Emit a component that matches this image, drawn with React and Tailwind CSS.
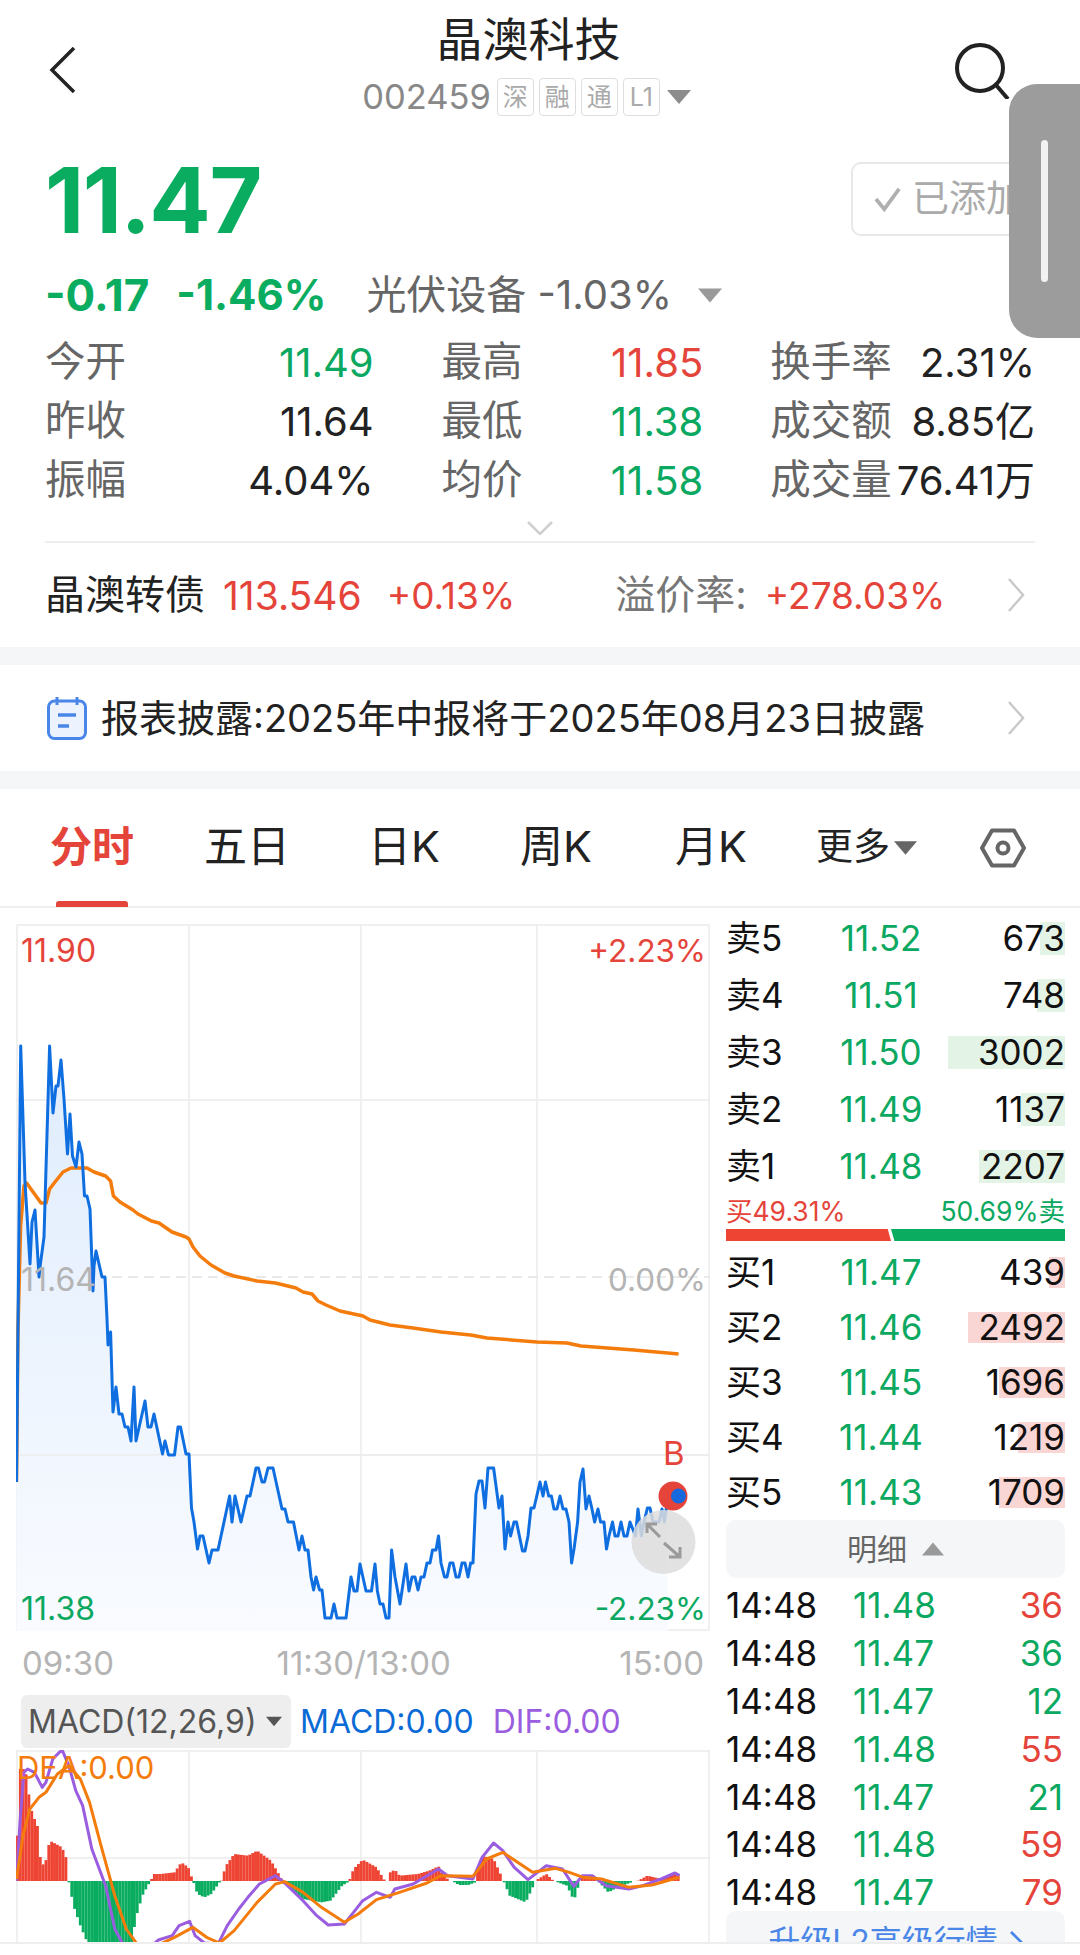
import React from "react";

const font = "font-['Inter','Noto_Sans_CJK_SC',sans-serif]";

const stats = [
  [["今开", "11.49", "text-[#0aa860]"], ["最高", "11.85", "text-[#e5443a]"], ["换手率", "2.31%", "text-[#222]"]],
  [["昨收", "11.64", "text-[#222]"], ["最低", "11.38", "text-[#0aa860]"], ["成交额", "8.85亿", "text-[#222]"]],
  [["振幅", "4.04%", "text-[#222]"], ["均价", "11.58", "text-[#0aa860]"], ["成交量", "76.41万", "text-[#222]"]],
];

const sells = [
  ["卖5", "11.52", "673", 25],
  ["卖4", "11.51", "748", 28],
  ["卖3", "11.50", "3002", 117],
  ["卖2", "11.49", "1137", 44],
  ["卖1", "11.48", "2207", 86],
];

const buys = [
  ["买1", "11.47", "439", 16],
  ["买2", "11.46", "2492", 97],
  ["买3", "11.45", "1696", 66],
  ["买4", "11.44", "1219", 47],
  ["买5", "11.43", "1709", 66],
];

const details = [
  ["11.48", "36", "text-[#e5443a]"],
  ["11.47", "36", "text-[#0aa860]"],
  ["11.47", "12", "text-[#0aa860]"],
  ["11.48", "55", "text-[#e5443a]"],
  ["11.47", "21", "text-[#0aa860]"],
  ["11.48", "59", "text-[#e5443a]"],
  ["11.47", "79", "text-[#e5443a]"],
];

// price line, page coordinates
const price = [[16.5,1483],[20.7,1047],[25,1183],[30,1265],[32,1223],[35,1211],[39,1278],[40,1268],[44,1238],[49.6,1047],[53,1114],[56,1087],[58,1087],[61,1061],[64,1100],[67.5,1155],[70,1115],[72.5,1157],[76,1168],[79,1143],[82,1155],[84.5,1197],[87,1197],[90,1210],[93,1292],[94,1267],[96,1252],[102,1278],[105,1278],[107,1320],[108,1346],[110.6,1333],[113,1413],[116,1388],[119,1415],[122,1415],[125,1428],[128,1428],[131,1442],[134,1388],[136,1442],[145,1402],[148,1428],[151,1428],[154,1415],[162.5,1455],[165,1442],[168.5,1456],[174.5,1456],[178,1428],[180.5,1428],[186,1455],[189,1455],[191.5,1509],[194,1523],[197.5,1550],[200,1537],[203,1537],[209,1564],[212,1551],[218,1551],[229.6,1497],[232,1523],[235,1497],[241,1523],[247,1497],[250,1497],[256,1469],[258.5,1469],[262,1483],[264.5,1483],[268,1469],[273,1469],[282,1510],[285,1510],[288,1523],[293.5,1523],[299,1551],[302,1537],[305,1551],[308,1551],[311,1578],[313.6,1591],[316,1578],[319.6,1591],[322,1591],[325,1619],[331,1619],[334,1605],[337,1619],[346,1619],[351,1578],[354,1592],[357,1592],[360,1565],[366,1592],[371.5,1592],[375,1565],[377.4,1592],[380,1605],[383,1605],[386,1619],[389,1619],[391.6,1551],[395,1578],[400,1605],[406,1565],[409,1592],[412,1578],[415,1578],[418,1591],[421,1578],[424,1578],[427,1564],[430,1564],[432.5,1551],[436,1551],[438.5,1537],[441,1564],[444.5,1578],[447,1578],[450,1564],[453,1564],[456,1578],[459,1578],[462,1564],[465,1564],[468,1578],[470.6,1564],[473,1564],[476,1495],[479,1482],[482,1482],[485,1509],[488,1469],[493.6,1469],[499,1509],[502,1497],[505,1550],[508,1523],[510.6,1537],[514,1523],[516.5,1523],[522.5,1552],[525,1552],[528,1537],[531,1509],[534,1509],[540,1483],[543,1497],[545.5,1483],[548.7,1497],[551.4,1497],[554,1510],[557,1510],[560,1497],[563,1510],[566,1510],[569,1523],[571.6,1564],[574,1550],[577.6,1523],[580,1483],[583,1470],[586,1510],[589,1497],[592,1510],[594.6,1523],[598,1510],[600.6,1523],[604,1523],[606.5,1550],[609,1537],[612.5,1523],[615,1537],[618,1537],[621,1523],[624,1537],[627,1537],[630,1523],[635.5,1537],[638,1510],[641.4,1537],[644,1523],[647.4,1509],[650,1509],[653,1523],[659,1523],[662,1510],[664.4,1523],[667.6,1500]];

const avg = [[16.5,1483],[18,1330],[20.6,1227],[24,1187],[26.6,1184],[41,1204],[46,1204],[49.6,1190],[55,1183],[63,1173],[71,1169],[87,1169],[94,1173],[105.6,1177],[110.6,1182],[113.4,1197],[120,1203],[133,1211],[138,1215],[151.5,1222],[159,1224],[172,1233],[186,1238],[189,1240],[193,1248],[200,1257],[211,1266],[225,1274],[234,1277],[257,1282],[275.5,1284],[296,1289],[303,1293],[312,1295],[318,1302],[326,1306],[340,1312],[363,1317],[370,1321],[390,1326],[413,1329],[441,1333],[470.6,1336],[487,1339],[537,1343],[567,1344],[581,1347],[634,1351],[678.6,1355]];

const toLine = (pts) => pts.map((p) => p.join(",")).join(" ");

// MACD traces read off the crop: x in crop units, y in crop units
const macdPt = ([x, y]) => [x / 2.178, 1660 + y / 3];
const dif = [[36,665],[44,480],[52,340],[60,330],[75,340],[92,385],[100,370],[115,300],[135,272],[150,320],[165,395],[180,440],[200,570],[230,680],[250,810],[270,860],[280,900],[320,900],[335,855],[345,843],[375,830],[390,800],[413,787],[425,830],[445,852],[475,855],[495,800],[520,750],[540,715],[565,675],[600,650],[620,672],[660,725],[690,770],[715,798],[750,795],[770,760],[790,725],[820,700],[850,715],[860,690],[900,675],[930,650],[955,630],[975,650],[1030,660],[1050,595],[1075,552],[1095,575],[1120,625],[1150,662],[1190,620],[1225,630],[1250,682],[1268,650],[1290,650],[1320,680],[1370,690],[1400,680],[1440,660],[1470,642],[1480,650]].map(macdPt);
const dea = [[36,660],[50,530],[65,450],[85,415],[100,400],[125,345],[150,320],[175,360],[195,430],[220,560],[250,710],[275,810],[300,858],[320,900],[335,870],[345,858],[380,835],[420,805],[450,835],[478,852],[510,815],[560,730],[600,675],[620,668],[660,700],[700,745],[750,790],[780,765],[820,722],[870,700],[930,672],[960,650],[1030,652],[1060,600],[1095,580],[1160,640],[1210,628],[1240,640],[1270,655],[1310,660],[1370,685],[1420,678],[1480,655]].map(macdPt);

const histo = [
  [[38,530],[44,330],[55,330],[62,400],[72,480],[80,480],[88,600],[97,625],[108,545],[122,555],[135,565],[145,600]],
  [[150,670],[160,740],[175,800],[190,850],[205,880],[285,880],[295,780],[310,710],[325,672]],
  [[330,660],[335,645],[350,645],[380,640],[395,610],[410,625],[420,665]],
  [[422,672],[430,705],[445,715],[460,705],[478,670]],
  [[482,665],[492,620],[510,585],[540,590],[560,575],[590,605],[605,640],[615,665]],
  [[620,670],[640,700],[660,720],[680,725],[700,730],[720,725],[745,680],[757,670]],
  [[762,660],[770,630],[790,602],[820,625],[838,665]],
  [[850,640],[860,632],[870,650],[910,645],[935,635],[955,622],[965,650],[975,660]],
  [[990,670],[1000,678],[1020,678],[1035,670]],
  [[1040,630],[1050,590],[1075,600],[1095,660]],
  [[1098,670],[1110,710],[1145,730],[1165,670]],
  [[1172,660],[1190,645],[1205,665]],
  [[1215,670],[1235,680],[1250,725],[1262,670]],
  [[1268,650],[1290,650],[1300,665]],
  [[1305,670],[1325,700],[1345,685],[1375,670]],
  [[1390,665],[1410,650],[1440,660],[1470,640],[1482,650]],
];

const histoBars = () => {
  const bars = [];
  histo.forEach((seg) => {
    for (let x = seg[0][0]; x <= seg[seg.length - 1][0]; x += 6.2) {
      let i = 0;
      while (i < seg.length - 2 && seg[i + 1][0] < x) i++;
      const [x0, y0] = seg[i];
      const [x1, y1] = seg[i + 1];
      const v = y0 + ((y1 - y0) * (x - x0)) / (x1 - x0);
      bars.push([x / 2.178, 1660 + v / 3]);
    }
  });
  return bars;
};

function Tri({ className }) {
  return (
    <svg viewBox="0 0 24 14" className={className}>
      <path d="M0 0h24L12 14z" fill="currentColor" />
    </svg>
  );
}

function RightArrow() {
  return (
    <svg viewBox="0 0 20 36" className="w-[19px] h-[34px]" fill="none" stroke="#c8c8c8" strokeWidth="2.5">
      <path d="M2 1l15 17L2 35" />
    </svg>
  );
}

function Tag({ children }) {
  return (
    <span className="flex items-center justify-center w-[37px] h-[38px] border-[1.5px] border-[#dedede] rounded-[4px] text-[25px] leading-none text-[#aaaaaa]">
      {children}
    </span>
  );
}

function StatCell({ label, value, color, width }) {
  return (
    <div className={`flex items-center justify-between ${width}`}>
      <span className="text-[#666] text-[40.5px] leading-none">{label}</span>
      <span className={`${color} text-[40px] leading-none`}>{value}</span>
    </div>
  );
}

function BookRow({ row, bar, height }) {
  const [label, p, qty, w] = row;
  return (
    <div className={`relative flex items-center ${height}`}>
      <span className="w-[98px] text-[35px] leading-none text-[#111]">{label}</span>
      <span className="w-[114px] text-center text-[35px] leading-none text-[#0aa860]">{p}</span>
      <div className="flex-1 flex justify-end relative">
        <div className={`absolute right-0 ${bar}`} style={{ width: w }} />
        <span className="relative text-[35px] leading-none text-[#111]">{qty}</span>
      </div>
    </div>
  );
}

export default function App() {
  const bars = histoBars();
  return (
    <div className={`relative w-[1080px] h-[1955px] bg-white overflow-hidden ${font}`}>
      {/* header */}
      <div className="flex h-[130px]">
        <div className="w-[361px] pl-[48px] pt-[47px]">
          <svg viewBox="0 0 28 46" className="w-[28px] h-[46px]" fill="none" stroke="#222" strokeWidth="3.5">
            <path d="M26 1L4 23l22 22" />
          </svg>
        </div>
        <div className="w-[331px] flex flex-col items-center">
          <div className="h-[78px] flex items-center text-[46px] leading-none text-[#222] pl-[4px]">晶澳科技</div>
          <div className="flex items-center gap-[5px]">
            <span className="text-[34.5px] leading-none text-[#888] mr-[1px]">002459</span>
            <Tag>深</Tag>
            <Tag>融</Tag>
            <Tag>通</Tag>
            <Tag>L1</Tag>
            <Tri className="w-[24px] h-[14px] text-[#8c8c8c] ml-[2px]" />
          </div>
        </div>
        <div className="pl-[262px] pt-[43px]">
          <svg viewBox="0 0 56 56" className="w-[56px] h-[56px]" fill="none" stroke="#222" strokeWidth="4">
            <circle cx="26" cy="25" r="23" />
            <path d="M42 42l12 14" />
          </svg>
        </div>
      </div>

      {/* quote */}
      <div className="flex items-center justify-between h-[135px] pl-[45px] pr-[38px]">
        <span className="text-[91px] leading-none font-bold text-[#0aad5f] tracking-[-1.5px] pt-[5px]">11.47</span>
        <div className="flex items-center w-[191px] h-[74px] border-2 border-[#e8e8e8] rounded-[10px] pl-[20px] mt-[2px] overflow-hidden">
          <svg viewBox="0 0 30 28" className="w-[30px] h-[26px] shrink-0" fill="none" stroke="#b0b0b0" strokeWidth="4">
            <path d="M2 14l9 11L27 3" />
          </svg>
          <span className="ml-[9px] text-[37px] leading-none text-[#aaaaaa] whitespace-nowrap">已添加</span>
        </div>
      </div>
      <div className="flex items-center h-[60px] pl-[45px]">
        <span className="text-[44px] leading-none font-bold text-[#0aad5f]">-0.17</span>
        <span className="ml-[27px] text-[42px] leading-none font-bold text-[#0aad5f]">-1.46%</span>
        <span className="ml-[40px] text-[40px] leading-none text-[#666]">光伏设备 -1.03%</span>
        <Tri className="w-[24px] h-[15px] text-[#9a9a9a] ml-[26px]" />
      </div>

      {/* stats */}
      <div className="mt-[8px] px-[45px]">
        {stats.map((row) => (
          <div key={row[0][0]} className="flex items-center h-[59px]">
            <StatCell label={row[0][0]} value={row[0][1]} color={row[0][2]} width="w-[329px]" />
            <StatCell label={row[1][0]} value={row[1][1]} color={row[1][2]} width="w-[262px] ml-[68px]" />
            <StatCell label={row[2][0]} value={row[2][1]} color={row[2][2]} width="w-[265px] ml-[67px]" />
          </div>
        ))}
      </div>
      <div className="mx-[45px] h-[33px] border-b-2 border-[#eeeeee] flex justify-center pt-[11px]">
        <svg viewBox="0 0 26 14" className="w-[26px] h-[14px]" fill="none" stroke="#cfcfcf" strokeWidth="2.5">
          <path d="M1 1l12 12L25 1" />
        </svg>
      </div>

      {/* bond row */}
      <div className="flex items-center h-[104px] pl-[45px] pr-[54px]">
        <span className="text-[40px] w-[178px] leading-none text-[#222] whitespace-nowrap">晶澳转债</span>
        <span className="text-[39px] leading-none text-[#e5443a]">113.546</span>
        <span className="ml-[25px] text-[37px] leading-none text-[#e5443a]">+0.13%</span>
        <span className="ml-[100px] text-[40px] leading-none text-[#777]">溢价率:</span>
        <span className="ml-[18px] text-[37px] leading-none text-[#e5443a]">+278.03%</span>
        <div className="ml-auto"><RightArrow /></div>
      </div>
      <div className="h-[18px] bg-[#f5f6f8]" />

      {/* report row */}
      <div className="flex items-center h-[106px] pl-[47px] pr-[54px]">
        <svg viewBox="0 0 40 44" className="w-[40px] h-[44px] shrink-0" fill="none">
          <rect x="1.5" y="5" width="37" height="37.5" rx="6" fill="#edf3fe" stroke="#4a86e8" strokeWidth="3" />
          <path d="M10 1v8M30 1v8" stroke="#4a86e8" strokeWidth="3" />
          <path d="M11 19h18M11 30h11" stroke="#4a86e8" strokeWidth="3.5" />
        </svg>
        <span className="ml-[14px] text-[38px] leading-none text-[#222] whitespace-nowrap">报表披露:2025年中报将于2025年08月23日披露</span>
        <div className="ml-auto"><RightArrow /></div>
      </div>
      <div className="h-[18px] bg-[#f5f6f8]" />

      {/* tabs */}
      <div className="relative flex items-center h-[119px] border-b-2 border-[#f0f0f0] text-[#222] text-[43px] leading-none pb-[2px]">
        <span className="absolute left-[50px] font-bold text-[#e5443a] text-[42px]">分时</span>
        <span className="absolute left-[204px]">五日</span>
        <span className="absolute left-[368px]">日K</span>
        <span className="absolute left-[520px]">周K</span>
        <span className="absolute left-[675px]">月K</span>
        <span className="absolute left-[816px] text-[37px]">更多</span>
        <Tri className="absolute left-[894px] top-[52px] w-[23px] h-[14px] text-[#666]" />
        <svg viewBox="0 0 46 40" className="absolute left-[980px] top-[39px] w-[46px] h-[40px]" fill="none" stroke="#666" strokeWidth="4">
          <path d="M12 2.5h22L44 20 34 37.5H12L2 20z" strokeLinejoin="round" />
          <circle cx="23" cy="20" r="5.5" />
        </svg>
        <div className="absolute left-[56px] bottom-[-1px] w-[72px] h-[6px] rounded-t-[3px] bg-[#e5443a]" />
      </div>

      {/* main */}
      <div className="flex h-[1036px] border-b-2 border-[#eeeeee] overflow-hidden">
        <div className="w-[726px] pl-[16px] pr-[16px] pt-[16px]">
          {/* intraday chart */}
          <div className="relative h-[707px] w-[694px]">
            <svg viewBox="16 925 694 707" className="absolute inset-0 w-[694px] h-[707px]" fill="none">
              <defs>
                <linearGradient id="fillPrice" x1="0" y1="0" x2="0" y2="1">
                  <stop offset="0" stopColor="#dfecfd" />
                  <stop offset="1" stopColor="#f9fbff" />
                </linearGradient>
              </defs>
              <rect x="17" y="926" width="692" height="705" stroke="#ececec" strokeWidth="1.5" />
              <path d="M189 925v707M361 925v707M537 925v707M16 1101h694M16 1456h694" stroke="#ececec" strokeWidth="1.5" />
              <path d="M16 1278h694" stroke="#e4e4e4" strokeWidth="1.5" strokeDasharray="10 6" />
              <polygon points={`16.5,1632 ${toLine(price)} 667.6,1632`} fill="url(#fillPrice)" />
              <path d="M16 1456h694" stroke="#ececec" strokeWidth="1.5" />
              <polyline points={toLine(avg)} stroke="#f47c0c" strokeWidth="3.5" strokeLinejoin="round" />
              <polyline points={toLine(price)} stroke="#0f6fe0" strokeWidth="3" strokeLinejoin="round" />
              <circle cx="663.5" cy="1543" r="32" fill="#dddddd" fillOpacity="0.85" />
              <path d="M660 1538l-13-13M647 1534v-9h10M664 1544l16 14M680 1548v10h-11" stroke="#9a9a9a" strokeWidth="3" />
              <circle cx="673" cy="1497" r="14.5" fill="#e5443a" />
              <circle cx="678.5" cy="1497" r="7.5" fill="#1668dc" />
            </svg>
            <span className="absolute left-[5px] top-[10px] text-[32px] leading-[34px] text-[#e5443a]">11.90</span>
            <span className="absolute right-[4px] top-[10px] text-[31.5px] leading-[34px] text-[#e5443a]">+2.23%</span>
            <span className="absolute left-[5px] top-[339px] text-[32px] leading-[34px] text-[#b4b4b4]">11.64</span>
            <span className="absolute right-[4px] top-[339px] text-[31.5px] leading-[34px] text-[#b4b4b4]">0.00%</span>
            <span className="absolute left-[5px] top-[668px] text-[32px] leading-[34px] text-[#0aa860]">11.38</span>
            <span className="absolute right-[4px] top-[668px] text-[31.5px] leading-[34px] text-[#0aa860]">-2.23%</span>
            <span className="absolute left-[647px] top-[512px] text-[33px] leading-[34px] text-[#e5443a]">B</span>
          </div>
          <div className="flex items-center justify-between h-[64px] px-[6px] text-[33px] leading-none text-[#b4b4b4]">
            <span>09:30</span>
            <span className="pr-[6px]">11:30/13:00</span>
            <span>15:00</span>
          </div>
          {/* macd */}
          <div className="flex items-center h-[53px] text-[32px] leading-none">
            <div className="flex items-center h-[53px] w-[270px] ml-[5px] pl-[7px] bg-[#eeeeee] rounded-[6px] text-[#555] whitespace-nowrap">
              MACD(12,26,9)
              <Tri className="w-[16px] h-[11px] ml-[9px] text-[#555] shrink-0" />
            </div>
            <span className="ml-[9px] text-[#0a6ad6]">MACD:0.00</span>
            <span className="ml-[19px] text-[#9b5de0]">DIF:0.00</span>
          </div>
          <div className="relative mt-[2px] h-[195px] w-[694px]">
            <svg viewBox="16 1751 694 195" className="absolute inset-0 w-[694px] h-[195px]" fill="none">
              <path d="M16 1752h694M17 1751v195M709 1751v195M189 1751v195M361 1751v195M537 1751v195M16 1859h694" stroke="#ececec" strokeWidth="1.5" />
              {bars.map(([x, y]) => (
                <rect
                  key={x}
                  x={x - 1.4}
                  y={Math.min(y, 1882)}
                  width="2.9"
                  height={Math.abs(y - 1882)}
                  fill={y < 1882 ? "#ee4433" : "#0aad5f"}
                />
              ))}
              <polyline points={toLine(dif)} stroke="#9b5de0" strokeWidth="3" strokeLinejoin="round" />
              <polyline points={toLine(dea)} stroke="#f47c0c" strokeWidth="3" strokeLinejoin="round" />
            </svg>
            <span className="absolute left-[1px] top-[1px] text-[31px] leading-[34px] text-[#f47c0c]">DEA:0.00</span>
          </div>
        </div>

        {/* order book */}
        <div className="w-[339px]">
          <div className="pt-[2px] h-[288px]">
            {sells.map((r) => (
              <BookRow key={r[0]} row={r} bar="top-[1px] bottom-[1px] bg-[#e3f3e6]" height="h-[57px]" />
            ))}
          </div>
          <div className="h-[49px] pt-[2px]">
            <div className="flex items-center justify-between h-[27px] text-[26.5px] leading-none">
              <span className="text-[#e5443a]">买49.31%</span>
              <span className="text-[#0aa860]">50.69%卖</span>
            </div>
            <div className="flex h-[12px] mt-[4px]">
              <div className="w-[165px] h-full bg-[#ee4433] [clip-path:polygon(0_0,98%_0,100%_100%,0_100%)]" />
              <div className="flex-1 h-full bg-[#0aad5f] [clip-path:polygon(0_0,100%_0,100%_100%,2%_100%)]" />
            </div>
          </div>
          <div>
            {buys.map((r) => (
              <BookRow key={r[0]} row={r} bar="top-[2px] bottom-[2px] bg-[#f9d5d3]" height="h-[55px]" />
            ))}
          </div>
          <div className="flex items-center justify-center h-[58px] bg-[#f5f6f8] rounded-[10px] text-[30px] leading-none text-[#666]">
            明细
            <Tri className="w-[22px] h-[14px] ml-[15px] text-[#999] rotate-180" />
          </div>
          <div className="h-[333px] pt-[4px] pr-[2px] overflow-hidden">
            {details.map((d, i) => (
              <div key={i} className="flex items-center h-[47.8px] text-[35px] leading-none">
                <span className="w-[127px] text-[#111]">14:48</span>
                <span className="text-[#0aa860]">{d[0]}</span>
                <span className={`ml-auto ${d[2]}`}>{d[1]}</span>
              </div>
            ))}
          </div>
          <div className="h-[34px] overflow-hidden bg-[#f5f6f8] rounded-t-[10px] flex justify-center pt-[14px]">
            <span className="flex items-center h-[34px] text-[32px] leading-none text-[#4a86e8] whitespace-nowrap">
              升级L2高级行情
              <svg viewBox="0 0 14 24" className="w-[13px] h-[22px] ml-[12px]" fill="none" stroke="#4a86e8" strokeWidth="3">
                <path d="M1 1l11 11L1 23" />
              </svg>
            </span>
          </div>
        </div>
      </div>

      {/* floating handle */}
      <div className="absolute right-0 top-[84px] w-[71px] h-[254px] rounded-l-[28px] bg-[#9c9c9c]">
        <div className="absolute left-[32px] top-[56px] w-[7px] h-[142px] rounded-full bg-[#f2f2f2]" />
      </div>
    </div>
  );
}
